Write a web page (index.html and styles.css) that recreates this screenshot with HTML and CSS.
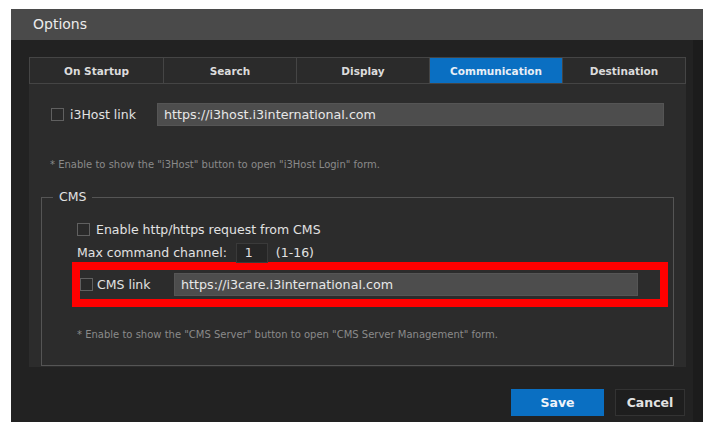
FILE: index.html
```html
<!DOCTYPE html>
<html lang="en">
<head>
<meta charset="utf-8">
<title>Options</title>
<link rel="stylesheet" href="styles.css">
</head>
<body>
<div class="dialog">
  <div class="titlebar">Options</div>
  <div class="dialog-body">
    <div class="main">
      <div class="tabs">
        <div class="tab">On Startup</div>
        <div class="tab">Search</div>
        <div class="tab">Display</div>
        <div class="tab active">Communication</div>
        <div class="tab">Destination</div>
      </div>
      <div class="panel">
        <div class="row host-row">
          <input type="checkbox" class="check">
          <span class="label host-label">i3Host link</span>
          <input type="text" class="field host-field" value="https://i3host.i3international.com">
        </div>
        <div class="note host-note">* Enable to show the "i3Host" button to open "i3Host Login" form.</div>
        <fieldset class="group">
          <legend class="group-title">CMS</legend>
          <div class="group-inner">
            <div class="row cms-enable">
              <input type="checkbox" class="check">
              <span class="label">Enable http/https request from CMS</span>
            </div>
            <div class="row cms-max">
              <span class="label">Max command channel:</span>
              <input type="text" class="small-field" value="1">
              <span class="label">(1-16)</span>
            </div>
            <div class="highlight">
              <div class="row cms-link">
                <input type="checkbox" class="check">
                <span class="label cms-label">CMS link</span>
                <input type="text" class="field cms-field" value="https://i3care.i3international.com">
              </div>
            </div>
            <div class="note cms-note">* Enable to show the "CMS Server" button to open "CMS Server Management" form.</div>
          </div>
        </fieldset>
      </div>
      <div class="actions">
        <button class="btn btn-save">Save</button>
        <button class="btn btn-cancel">Cancel</button>
      </div>
    </div>
    <div class="side-strip"></div>
  </div>
</div>
</body>
</html>
```

FILE: styles.css
```css
html, body {
  margin: 0;
  padding: 0;
  background: #ffffff;
}

body {
  font-family: "DejaVu Sans", "Liberation Sans", sans-serif;
  color: #e2e2e2;
}

.dialog {
  margin: 9px 0 0 11px;
  width: 692px;
  height: 413px;
  display: flex;
  flex-direction: column;
  background: #222222;
}

.titlebar {
  height: 31px;
  flex: none;
  background: #4a4a4a;
  color: #ececec;
  font-size: 14px;
  line-height: 30px;
  padding-left: 22px;
}

.dialog-body {
  flex: 1;
  display: flex;
}

.main {
  width: 682px;
  padding: 17px 0 0 18px;
  box-sizing: border-box;
}

.side-strip {
  flex: 1;
  background: #1c1c1c;
}

/* tab strip */
.tabs {
  width: 657px;
  display: grid;
  grid-template-columns: repeat(4, 133px) 1fr;
  height: 27px;
  box-sizing: border-box;
  border: 1px solid #454545;
  background: #2b2b2b;
}

.tab {
  border-left: 1px solid #454545;
  font-size: 10.5px;
  font-weight: bold;
  color: #dcdcdc;
  display: flex;
  align-items: center;
  justify-content: center;
}

.tab:first-child {
  border-left: none;
}

.tab.active {
  background: #0a6fc2;
  color: #e8eef6;
}

/* content panel */
.panel {
  width: 657px;
  background: #2c2c2c;
  padding: 19px 0 1px;
  box-sizing: border-box;
}

.row {
  display: flex;
  align-items: center;
}

.check {
  appearance: none;
  -webkit-appearance: none;
  margin: 0;
  width: 13px;
  height: 13px;
  box-sizing: border-box;
  border: 1px solid #606060;
  background: #2a2a2a;
  flex: none;
}

.label {
  font-size: 12.5px;
  color: #e2e2e2;
  white-space: nowrap;
}

.field {
  height: 23px;
  box-sizing: border-box;
  border: 1px solid #555555;
  background: #4d4d4d;
  color: #e8e8e8;
  font-family: "DejaVu Sans", "Liberation Sans", sans-serif;
  font-size: 12.7px;
  padding: 0 6px;
  outline: none;
}

.host-row {
  padding-left: 22px;
  height: 23px;
}

.host-label {
  margin-left: 6px;
  width: 87px;
}

.host-field {
  width: 507px;
}

.note {
  font-size: 10px;
  color: #8a8a8a;
  line-height: 11px;
  white-space: nowrap;
}

.host-note {
  padding-left: 21px;
  margin-top: 33px;
}

/* CMS group */
.group {
  margin: 19px 12px 0;
  padding: 0;
  border: 1px solid #555555;
  min-width: 0;
}

.group-title {
  margin-left: 11px;
  padding: 0 6px;
  font-size: 12.5px;
  line-height: 16px;
  color: #e2e2e2;
}

.group-inner {
  padding: 14px 5px 25px 35px;
}

.cms-enable {
  height: 20px;
}

.cms-enable .label {
  margin-left: 6px;
}

.cms-max {
  margin-top: 4px;
  height: 19px;
}

.small-field {
  width: 32px;
  height: 20px;
  box-sizing: border-box;
  margin: 0 8px 0 9px;
  border: 1px solid #3a3a3a;
  background: #262626;
  color: #e2e2e2;
  font-family: "DejaVu Sans", "Liberation Sans", sans-serif;
  font-size: 12.5px;
  padding: 0 8px;
  outline: none;
}

.highlight {
  margin-left: -5px;
  border: 8px solid #ff0000;
  padding: 3px 21px 3px 0;
}

.cms-link {
  height: 23px;
}

.cms-label {
  margin-left: 4px;
  width: 77px;
}

.cms-field {
  width: 464px;
}

.cms-note {
  margin-top: 22px;
}

/* footer buttons */
.actions {
  display: flex;
  justify-content: flex-end;
  gap: 11px;
  width: 656px;
  margin-top: 22px;
}

.btn {
  height: 27px;
  font-family: "DejaVu Sans", "Liberation Sans", sans-serif;
  font-weight: bold;
  font-size: 12.5px;
  cursor: pointer;
}

.btn-save {
  width: 93px;
  border: none;
  background: #0a6fc2;
  color: #eef3f9;
}

.btn-cancel {
  width: 70px;
  border: 1px solid #333333;
  background: #1e1e1e;
  color: #e2e2e2;
}
```
